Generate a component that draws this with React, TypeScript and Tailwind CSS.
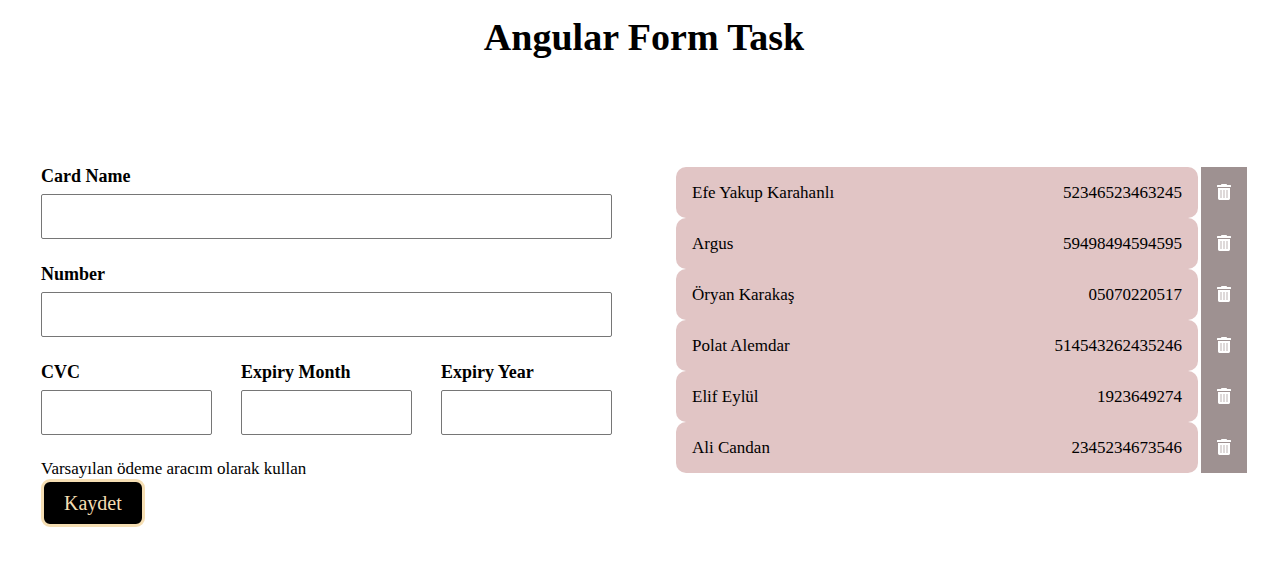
import { useState } from 'react';

type Card = { name: string; number: string };

const initialCards: Card[] = [
  { name: 'Efe Yakup Karahanlı', number: '52346523463245' },
  { name: 'Argus', number: '59498494594595' },
  { name: 'Öryan Karakaş', number: '05070220517' },
  { name: 'Polat Alemdar', number: '514543262435246' },
  { name: 'Elif Eylül', number: '1923649274' },
  { name: 'Ali Candan', number: '2345234673546' },
];

function TrashIcon() {
  return (
    <svg viewBox="0 0 14 16" className="h-4 w-[14px]" aria-hidden="true">
      <path
        fill="#fff"
        d="M4.5 0h5l.6 1H13.5a.5.5 0 0 1 .5.5V3H0V1.5A.5.5 0 0 1 .5 1h3.4zM1 4h12v10.6a1.4 1.4 0 0 1-1.4 1.4H2.4A1.4 1.4 0 0 1 1 14.600z"
      />
      <path fill="#ded9d9" d="M3 6h2v8H3zM6 6h2v8H6zM9 6h2v8H9z" />
    </svg>
  );
}

function Field({ id, label }: { id: string; label: string }) {
  return (
    <div className="flex min-w-0 flex-1 flex-col gap-[7px]">
      <label htmlFor={id} className="text-[18px] leading-[18px] pb-0.5 font-bold">
        {label}
      </label>
      <input
        id={id}
        name={id}
        type="text"
        className="h-[45px] w-full rounded-[2px] border border-[#767676] bg-white px-2"
      />
    </div>
  );
}

export default function App() {
  const [cards, setCards] = useState(initialCards);

  return (
    <main className="bg-white pt-[19px] pr-[29px] pb-8 pl-[41px] font-[Georgia,'Liberation_Serif',serif] text-[17px] leading-5 text-black">
      <h1 className="text-center text-[38px] leading-9 font-bold">Angular Form Task</h1>

      <div className="mt-28 grid grid-cols-2 items-start gap-16">
        <form onSubmit={(e) => e.preventDefault()}>
          <div className="flex flex-col gap-[26px]">
            <Field id="cardName" label="Card Name" />
            <Field id="number" label="Number" />
            <div className="flex gap-[29px]">
              <Field id="cvc" label="CVC" />
              <Field id="expiryMonth" label="Expiry Month" />
              <Field id="expiryYear" label="Expiry Year" />
            </div>
          </div>
          <p className="mt-6">Varsayılan ödeme aracım olarak kullan</p>
          <button
            type="submit"
            className="h-12 rounded-[9px] border-3 border-[#f5deb3] bg-black px-5 text-[20px] text-[#f5deb3]"
          >
            Kaydet
          </button>
        </form>

        <ul>
          {cards.map((card) => (
            <li key={card.number} className="flex h-[51px] gap-[3px]">
              <div className="flex flex-1 items-center justify-between rounded-[10px] bg-[#e1c5c5] px-4">
                <span>{card.name}</span>
                <span>{card.number}</span>
              </div>
              <button
                type="button"
                aria-label={`${card.name} sil`}
                onClick={() => setCards(cards.filter((c) => c !== card))}
                className="flex w-[46px] items-center justify-center bg-[#9e9191] pb-px text-white"
              >
                <TrashIcon />
              </button>
            </li>
          ))}
        </ul>
      </div>
    </main>
  );
}
